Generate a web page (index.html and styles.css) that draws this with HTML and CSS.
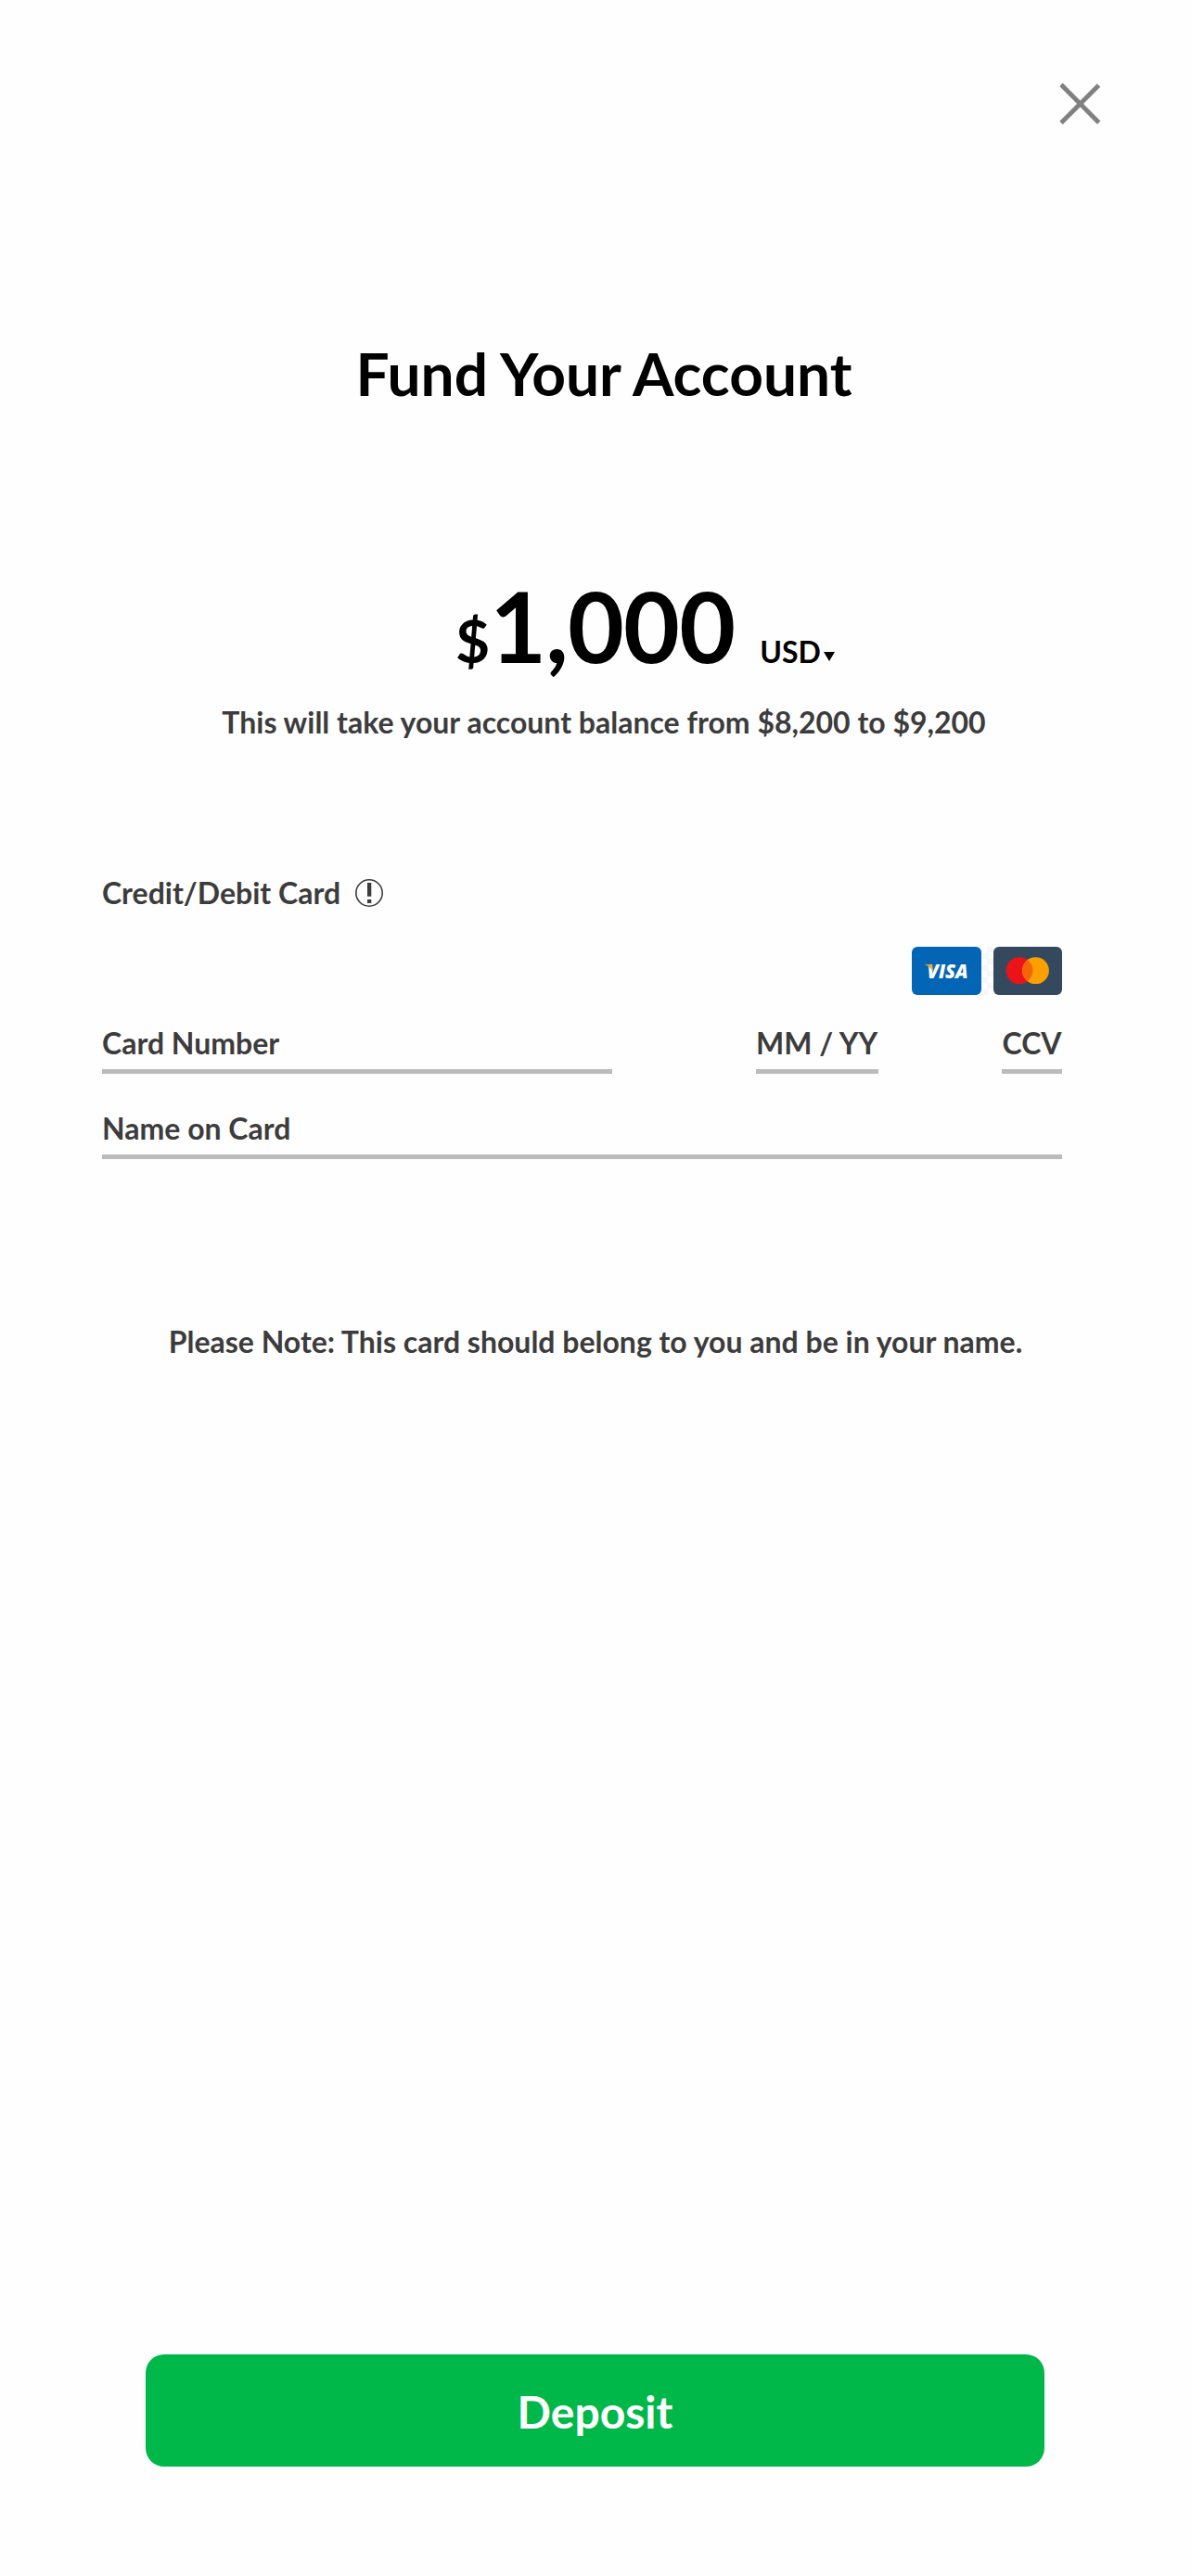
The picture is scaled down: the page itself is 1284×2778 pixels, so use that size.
FILE: index.html
```html
<!DOCTYPE html>
<html lang="en">
<head>
<meta charset="utf-8">
<title>Fund Your Account</title>
<link rel="stylesheet" href="styles.css">
</head>
<body>
<main class="screen">
  <header class="topbar">
    <button class="close" aria-label="Close">
      <svg width="48" height="48" viewBox="0 0 48 48"><path d="M4 3.200 44.700 44.200M44.500 4 4 44.600" fill="none" stroke="#808080" stroke-width="4.900"/></svg>
    </button>
  </header>

  <h1 class="title">Fund Your Account</h1>

  <section class="amount">
    <span class="amount-sign">$</span>
    <span class="amount-value">1,000</span>
    <span class="amount-currency">USD</span>
    <svg class="amount-caret" width="12" height="10" viewBox="0 0 12 10"><path d="M0 0H12L6 10Z"/></svg>
  </section>
  <p class="balance">This will take your account balance from $8,200 to $9,200</p>

  <form class="card-form">
    <div class="method">
      <span class="method-label">Credit/Debit Card</span>
      <svg width="30" height="30" viewBox="0 0 30 30"><circle cx="15" cy="15" r="14.200" fill="none" stroke="#3c3c3c" stroke-width="1.600"/><path d="M13 4h4.300v14.700H13zM13 22h4.300v4H13z" fill="#3c3c3c"/></svg>
    </div>
    <div class="brands">
      <svg width="75" height="52" viewBox="0 0 75 52">
        <rect width="75" height="52" rx="6" fill="#0365b5"/>
        <text class="visa" x="16.500" y="34" textLength="44" lengthAdjust="spacingAndGlyphs">VISA</text>
        <path d="M13.500 19H20Q22 19 22.400 21.500L23.200 27.500Q20 21.200 13.500 19Z" fill="#f5a623"/>
      </svg>
      <span class="brands-gap"></span>
      <svg width="74" height="52" viewBox="0 0 74 52">
        <rect width="74" height="52" rx="6" fill="#35495e"/>
        <circle cx="28" cy="25.700" r="14.400" fill="#eb1319"/>
        <circle cx="45.500" cy="25.700" r="14.400" fill="#fba000"/>
        <path d="M36.750 14.260a14.400 14.400 0 0 1 0 22.880a14.400 14.400 0 0 1 0-22.880Z" fill="#f36507"/>
      </svg>
    </div>
    <div class="row">
      <div class="field field-number">Card Number</div>
      <div class="field field-expiry">MM / YY</div>
      <div class="field field-ccv">CCV</div>
    </div>
    <div class="field field-name">Name on Card</div>
  </form>

  <p class="note">Please Note: This card should belong to you and be in your name.</p>

  <button class="deposit">Deposit</button>
</main>
</body>
</html>
```
FILE: styles.css
```css
* { box-sizing: border-box; }

body {
  margin: 0;
  background: #fefefe;
  font-family: Lato, "Liberation Sans", sans-serif;
  font-weight: 700;
  font-size: 32px;
  line-height: 40px;
  color: #3c3c3c;
}

.screen {
  display: flex;
  flex-direction: column;
  width: 1284px;
  height: 2778px;
}

.topbar {
  display: flex;
  justify-content: flex-end;
  padding: 88px 96px 0 0;
}

.close {
  width: 48px;
  height: 48px;
  padding: 0;
  border: 0;
  background: none;
}

.close svg { display: block; }

.title {
  margin: 227px 0 0;
  padding-left: 18px;
  font-size: 64px;
  line-height: 80px;
  text-align: center;
  color: #000;
}

.amount {
  display: flex;
  align-items: baseline;
  height: 126px;
  margin-top: 168px;
  padding-left: 491px;
  color: #000;
}

.amount-sign {
  font-size: 64px;
  line-height: 80px;
}

.amount-value {
  font-size: 105px;
  line-height: 126px;
  letter-spacing: -0.8px;
}

.amount-currency { margin-left: 27px; }

.amount-caret {
  align-self: flex-start;
  margin: 92px 0 0 3px;
}

.balance {
  margin: 22px 0 0;
  padding-left: 18px;
  text-align: center;
}

.card-form {
  width: 1035px;
  margin: 144px 0 0 110px;
}

.method {
  display: flex;
  align-items: center;
  height: 40px;
}

.method svg { margin-left: 16px; }

.brands {
  display: flex;
  justify-content: flex-end;
  height: 52px;
  margin-top: 38px;
}

.brands-gap {
  width: 13px;
  height: 52px;
  background: repeating-conic-gradient(#f7f7f7 0 25%, #fefefe 0 50%) 0 0 / 13px 13px;
}

.visa {
  font: italic 800 21px "Open Sans", sans-serif;
  fill: #fff;
}

.row {
  display: flex;
  margin-top: 31px;
}

.field {
  height: 54px;
  padding-top: 1px;
  border-bottom: 5px solid #bbb;
  white-space: nowrap;
}

.field-number { width: 550px; }

.field-expiry {
  width: 132px;
  margin-left: 155px;
}

.field-ccv {
  width: 65px;
  margin-left: auto;
  padding-left: 0.5px;
}

.field-name { margin-top: 38px; }

.note {
  margin: 177px 0 0;
  text-align: center;
}

.deposit {
  width: 969px;
  height: 121px;
  margin: 1072px 0 0 157px;
  padding: 2px 0 0;
  border: 0;
  border-radius: 20px;
  background: #00b84a;
  font: 700 48px/60px Lato, "Liberation Sans", sans-serif;
  color: #fff;
}
```
